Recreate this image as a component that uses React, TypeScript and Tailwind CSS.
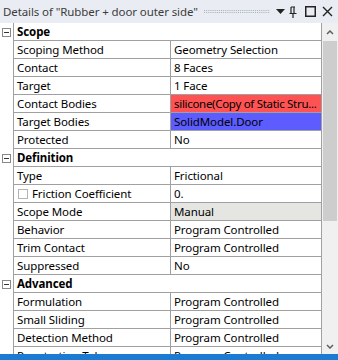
type Row =
  | { kind: "group"; label: string }
  | { kind: "prop"; label: string; value: string; tone?: "red" | "blue" | "gray"; check?: boolean };

const rows: Row[] = [
  { kind: "group", label: "Scope" },
  { kind: "prop", label: "Scoping Method", value: "Geometry Selection" },
  { kind: "prop", label: "Contact", value: "8 Faces" },
  { kind: "prop", label: "Target", value: "1 Face" },
  { kind: "prop", label: "Contact Bodies", value: "silicone(Copy of Static Stru...", tone: "red" },
  { kind: "prop", label: "Target Bodies", value: "SolidModel.Door", tone: "blue" },
  { kind: "prop", label: "Protected", value: "No" },
  { kind: "group", label: "Definition" },
  { kind: "prop", label: "Type", value: "Frictional" },
  { kind: "prop", label: "Friction Coefficient", value: "0.", check: true },
  { kind: "prop", label: "Scope Mode", value: "Manual", tone: "gray" },
  { kind: "prop", label: "Behavior", value: "Program Controlled" },
  { kind: "prop", label: "Trim Contact", value: "Program Controlled" },
  { kind: "prop", label: "Suppressed", value: "No" },
  { kind: "group", label: "Advanced" },
  { kind: "prop", label: "Formulation", value: "Program Controlled" },
  { kind: "prop", label: "Small Sliding", value: "Program Controlled" },
  { kind: "prop", label: "Detection Method", value: "Program Controlled" },
  { kind: "prop", label: "Penetration Tolerance", value: "Program Controlled" },
];

const TONE = {
  red: "bg-[#ff5252] tracking-[-0.3px]",
  blue: "bg-[#5c5cff]",
  gray: "bg-[#e5e5e1]",
};

function MinusBox() {
  return (
    <span className="mt-[5px] ml-[2px] flex h-[9px] w-[9px] items-center justify-center border border-[#888]">
      <span className="h-px w-[5px] bg-[#333]" />
    </span>
  );
}

function TitleBar() {
  return (
    <div className="flex h-[23px] shrink-0 items-center bg-[#e9edf3] pl-[3px] pr-[5px] text-[#3c3c3c]">
      <span className="whitespace-nowrap">Details of "Rubber + door outer side"</span>
      <svg className="ml-[6px] flex-1" height="4" viewBox="0 0 70 4" preserveAspectRatio="none">
        <defs>
          <pattern id="grip" width="2" height="2" patternUnits="userSpaceOnUse">
            <rect width="1" height="1" fill="#a8afb9" />
          </pattern>
        </defs>
        <rect width="70" height="4" fill="url(#grip)" />
      </svg>
      <svg className="ml-[6px]" width="9" height="6" viewBox="0 0 9 6">
        <path d="M0 0h9L4.5 5z" fill="#222" />
      </svg>
      <svg className="ml-[4px]" width="8" height="12" viewBox="0 0 8 12">
        <path d="M2 1h4M2 1v6M5 1v6M0.5 7.5h7M4 7.5v4.5" stroke="#222" fill="none" strokeWidth="1.2" />
      </svg>
      <svg className="ml-[8px]" width="11" height="11" viewBox="0 0 11 11">
        <rect x="0.75" y="0.75" width="9.5" height="9.5" stroke="#222" strokeWidth="1.5" fill="none" />
      </svg>
      <svg className="ml-[6px]" width="11" height="11" viewBox="0 0 11 11">
        <path d="M1 1l9 9M10 1l-9 9" stroke="#222" strokeWidth="1.4" />
      </svg>
    </div>
  );
}

function Scrollbar() {
  return (
    <div className="flex w-[16px] shrink-0 flex-col bg-[#f0f0f0]">
      <div className="flex h-[18px] items-center justify-center">
        <svg width="8" height="5" viewBox="0 0 8 5">
          <path d="M1 4l3-3 3 3" stroke="#606060" strokeWidth="1.5" fill="none" />
        </svg>
      </div>
      <div className="mx-[1px] h-[180px] bg-[#cdcdcd]" />
      <div className="flex-1" />
      <div className="flex h-[16px] items-center justify-center">
        <svg width="8" height="5" viewBox="0 0 8 5">
          <path d="M1 1l3 3 3-3" stroke="#606060" strokeWidth="1.5" fill="none" />
        </svg>
      </div>
    </div>
  );
}

export default function App() {
  return (
    <div
      className="flex h-[360px] w-[338px] flex-col overflow-hidden bg-white text-[11.5px] leading-[18px] tracking-[-0.1px] text-black"
      style={{ fontFamily: '"Noto Sans", "Open Sans", sans-serif' }}
    >
      <TitleBar />
      <div className="flex min-h-0 flex-1">
        <div className="flex-1 overflow-hidden">
          {rows.map((r) =>
            r.kind === "group" ? (
              <div key={r.label} className="flex h-[18px]">
                <div className="w-[14px] shrink-0 border-r border-[#a0a0a0]">
                  <MinusBox />
                </div>
                <div className="flex-1 border-b border-[#a0a0a0] pl-[3px] font-bold">{r.label}</div>
              </div>
            ) : (
              <div key={r.label} className="flex h-[18px]">
                <div className="w-[14px] shrink-0 border-r border-[#a0a0a0]" />
                <div className="flex w-[157px] shrink-0 items-center border-r border-b border-[#a0a0a0] pl-[3px] whitespace-nowrap">
                  {r.check && (
                    <span className="mr-[4px] ml-[1px] h-[10px] w-[10px] border border-[#b4b4b4]" />
                  )}
                  {r.label}
                </div>
                <div
                  className={`flex-1 overflow-hidden border-b border-[#a0a0a0] pl-[3px] whitespace-nowrap ${
                    r.tone ? TONE[r.tone] : ""
                  }`}
                >
                  {r.value}
                </div>
              </div>
            )
          )}
        </div>
        <div className="w-px shrink-0 bg-[#a0a0a0]" />
        <Scrollbar />
      </div>
      <div className="h-[6px] shrink-0 bg-[#1b7bd3]" />
    </div>
  );
}
